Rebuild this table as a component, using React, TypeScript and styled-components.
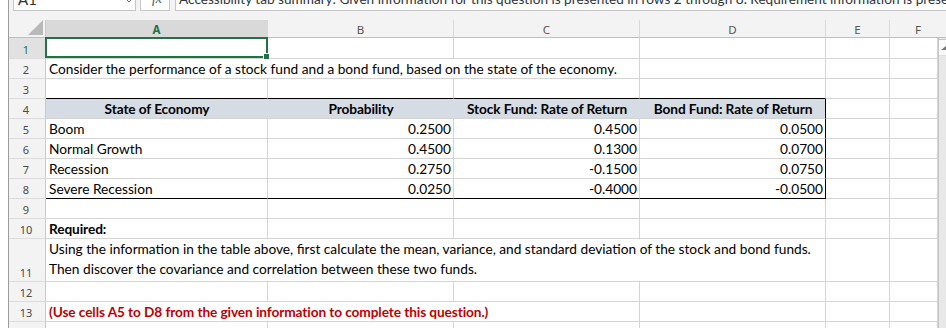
import React from 'react';
import styled, { createGlobalStyle } from 'styled-components';

const Global = createGlobalStyle`
  html, body { margin: 0; padding: 0; background: #fff; overflow: hidden; }
  #root { width: 946px; height: 328px; }
`;

const CELL_FONT = `Lato, "Open Sans", sans-serif`;
const UI_FONT = `"Noto Sans", "Open Sans", sans-serif`;
const GRID = '#d4d4d4';
const GREEN = '#217346';
const TABLE_FILL = '#d6dce4';

const Page = styled.div`
  width: 946px;
  height: 328px;
  overflow: hidden;
  padding-left: 8px;
  box-sizing: border-box;
  background: #fff;
`;

const Frame = styled.div`
  display: flex;
  flex-direction: column;
  height: 100%;
  border-left: 1px solid #9c9c9c;
`;

const FormulaBar = styled.div`
  height: 20px;
  flex: none;
  display: flex;
  align-items: flex-end;
  gap: 4px;
  padding: 0 0 9px 4px;
  box-sizing: border-box;
  background: #f3f3f3;
`;

const NameBox = styled.div`
  position: relative;
  width: 123px;
  height: 24px;
  flex: none;
  box-sizing: border-box;
  background: #fff;
  border: 1px solid #c6c6c6;
  font: 15px ${CELL_FONT};
  color: #333;
  line-height: 22px;
  padding-left: 4px;
`;

const Chevron = styled.svg`
  position: absolute;
  right: 3px;
  bottom: 7px;
`;

const FxBox = styled.div`
  width: 30px;
  height: 24px;
  flex: none;
  box-sizing: border-box;
  background: #fff;
  border: 1px solid #c6c6c6;
  font: italic 14px "Liberation Serif", serif;
  color: #555;
  line-height: 22px;
  text-align: right;
  padding-right: 7px;
  margin-right: 1px;
`;

const FormulaInput = styled.div`
  flex: 1;
  height: 24px;
  box-sizing: border-box;
  background: #fff;
  border: 1px solid #c6c6c6;
  border-right: none;
  font: 13.6px ${CELL_FONT};
  color: #2e3440;
  line-height: 22px;
  padding-left: 3px;
  white-space: nowrap;
  overflow: hidden;
`;

const Grid = styled.div`
  display: grid;
  grid-template-columns: 37px 222px 186px 186px 186px 64px 48px 9px;
  grid-template-rows: 18px 21px repeat(9, 20px) 43px 20px 20px 20px;
`;

const Corner = styled.div`
  background: #f3f3f3;
  border-right: 1px solid #c9c9c9;
  border-bottom: 1px solid #bfbfbf;
  display: flex;
  align-items: flex-end;
  justify-content: flex-end;
  padding: 0 2px 2px 0;
`;

const ColHeader = styled.div<{ $selected?: boolean; $span?: number }>`
  grid-column: span ${(p) => p.$span ?? 1};
  background: ${(p) => (p.$selected ? '#d9d9d9' : '#f3f3f3')};
  border-right: 1px solid #d9d9d9;
  border-bottom: 1px solid #bfbfbf;
  font: ${(p) => (p.$selected ? 'bold' : 'normal')} 11.5px ${UI_FONT};
  color: ${(p) => (p.$selected ? GREEN : '#555')};
  display: flex;
  align-items: center;
  justify-content: center;
  padding-top: 1px;
`;

const RowHeader = styled.div<{ $selected?: boolean }>`
  background: ${(p) => (p.$selected ? '#e1e1e1' : '#f3f3f3')};
  border-right: 1px solid #c9c9c9;
  border-bottom: 1px solid #dcdcdc;
  font: 11px ${UI_FONT};
  color: ${(p) => (p.$selected ? GREEN : '#4a4a4a')};
  display: flex;
  align-items: flex-end;
  justify-content: center;
  padding: 0 2px 2px 0;
  line-height: 12px;
`;

type Align = 'left' | 'right' | 'center';

const Cell = styled.div<{
  $span?: number;
  $align?: Align;
  $bold?: boolean;
  $color?: string;
  $fill?: string;
  $bb?: string;
  $br?: string;
  $pb?: number;
}>`
  position: relative;
  grid-column: span ${(p) => p.$span ?? 1};
  background: ${(p) => p.$fill ?? '#fff'};
  border-right: 1px solid ${(p) => p.$br ?? GRID};
  border-bottom: 1px solid ${(p) => p.$bb ?? GRID};
  display: flex;
  flex-direction: column;
  justify-content: flex-end;
  align-items: ${(p) =>
    p.$align === 'right' ? 'flex-end' : p.$align === 'center' ? 'center' : 'flex-start'};
  padding: 0 2px ${(p) => p.$pb ?? 1}px 3px;
  font: ${(p) => (p.$bold ? 'bold' : 'normal')} 13.7px ${CELL_FONT};
  letter-spacing: ${(p) => (p.$bold ? '-0.1px' : 'normal')};
  color: ${(p) => p.$color ?? '#000'};
  line-height: 17px;
  white-space: nowrap;
  min-width: 0;
`;

const Line = styled.span<{ $h?: number }>`
  display: block;
  line-height: ${(p) => p.$h ?? 17}px;
`;

const Selection = styled.div`
  position: absolute;
  top: -1px;
  left: -1px;
  right: -1px;
  bottom: 0;
  border: 2px solid ${GREEN};
  z-index: 2;
  pointer-events: none;
`;

const Handle = styled.div`
  position: absolute;
  right: -4px;
  bottom: -4px;
  width: 5px;
  height: 5px;
  background: ${GREEN};
  border: 1px solid #fff;
`;

const Scrollbar = styled.div`
  grid-column: 8;
  grid-row: 2 / -1;
  background: #e8e8e8;
  border-left: 1px solid #c6c6c6;
  display: flex;
  flex-direction: column;
`;

const ScrollButton = styled.div`
  height: 15px;
  margin-top: 1px;
  background: #fafafa;
  border-top: 1px solid #c6c6c6;
  border-bottom: 1px solid #dcdcdc;
  display: flex;
  align-items: center;
  justify-content: flex-end;
  padding-right: 1px;
`;

const TableHead = styled(Cell).attrs({ $fill: TABLE_FILL, $bold: true, $align: 'center' as Align })``;

const cols = ['A', 'B', 'C', 'D', 'E', 'F'];

const data = [
  ['Boom', '0.2500', '0.4500', '0.0500'],
  ['Normal Growth', '0.4500', '0.1300', '0.0700'],
  ['Recession', '0.2750', '-0.1500', '0.0750'],
  ['Severe Recession', '0.0250', '-0.4000', '-0.0500'],
];

const EmptyRest = ({ from }: { from: number }) => (
  <>
    {cols.slice(from).map((c) => (
      <Cell key={c} />
    ))}
  </>
);

export default function App() {
  return (
    <>
      <Global />
      <Page>
        <Frame>
          <FormulaBar>
            <NameBox>
              A1
              <Chevron width="6" height="4" viewBox="0 0 6 4">
                <path d="M0.5 0.5 L3 3 L5.5 0.5" fill="none" stroke="#666" strokeWidth="1" />
              </Chevron>
            </NameBox>
            <FxBox>fx</FxBox>
            <FormulaInput>
              Accessibility tab summary: Given information for this question is presented in rows 2 through 8. Requirement information is presented in rows 10 through 13.
            </FormulaInput>
          </FormulaBar>
          <Grid>
            <Corner>
              <svg width="15" height="15" viewBox="0 0 15 15">
                <path d="M15 0 L15 15 L0 15 Z" fill="#b9b9b9" />
              </svg>
            </Corner>
            {cols.map((c, i) => (
              <ColHeader key={c} $selected={i === 0} $span={c === 'F' ? 2 : 1}>
                {c}
              </ColHeader>
            ))}

            <RowHeader $selected>1</RowHeader>
            <Cell>
              <Selection>
                <Handle />
              </Selection>
            </Cell>
            <EmptyRest from={1} />
            <Scrollbar>
              <ScrollButton>
                <svg width="5" height="4" viewBox="0 0 5 4">
                  <path d="M5 0 L5 4 L0 4 Z" fill="#777" />
                </svg>
              </ScrollButton>
            </Scrollbar>

            <RowHeader>2</RowHeader>
            <Cell $span={3}>
              Consider the performance of a stock fund and a bond fund, based on the state of the economy.
            </Cell>
            <EmptyRest from={3} />

            <RowHeader>3</RowHeader>
            <Cell $bb="#000" />
            <Cell $bb="#000" />
            <Cell $bb="#000" />
            <Cell $bb="#000" />
            <EmptyRest from={4} />

            <RowHeader>4</RowHeader>
            <TableHead $br={TABLE_FILL}>State of Economy</TableHead>
            <TableHead $br={TABLE_FILL}>Probability</TableHead>
            <TableHead $br={TABLE_FILL}>Stock Fund: Rate of Return</TableHead>
            <TableHead $br="#000">Bond Fund: Rate of Return</TableHead>
            <EmptyRest from={4} />

            {data.map((r, i) => (
              <React.Fragment key={r[0]}>
                <RowHeader>{5 + i}</RowHeader>
                <Cell $bb={i === 3 ? '#000' : undefined}>{r[0]}</Cell>
                <Cell $align="right" $bb={i === 3 ? '#000' : undefined}>{r[1]}</Cell>
                <Cell $align="right" $bb={i === 3 ? '#000' : undefined}>{r[2]}</Cell>
                <Cell $align="right" $br="#000" $bb={i === 3 ? '#000' : undefined}>{r[3]}</Cell>
                <EmptyRest from={4} />
              </React.Fragment>
            ))}

            <RowHeader>9</RowHeader>
            <EmptyRest from={0} />

            <RowHeader>10</RowHeader>
            <Cell $bold>Required:</Cell>
            <EmptyRest from={1} />

            <RowHeader>11</RowHeader>
            <Cell $span={4} $pb={2}>
              <Line $h={20}>
                Using the information in the table above, first calculate the mean, variance, and standard deviation of the stock and bond funds.
              </Line>
              <Line $h={20}>Then discover the covariance and correlation between these two funds.</Line>
            </Cell>
            <EmptyRest from={4} />

            <RowHeader>12</RowHeader>
            <EmptyRest from={0} />

            <RowHeader>13</RowHeader>
            <Cell $span={3} $bold $color="#c00000">
              (Use cells A5 to D8 from the given information to complete this question.)
            </Cell>
            <EmptyRest from={3} />

            <RowHeader>14</RowHeader>
            <EmptyRest from={0} />
          </Grid>
        </Frame>
      </Page>
    </>
  );
}
